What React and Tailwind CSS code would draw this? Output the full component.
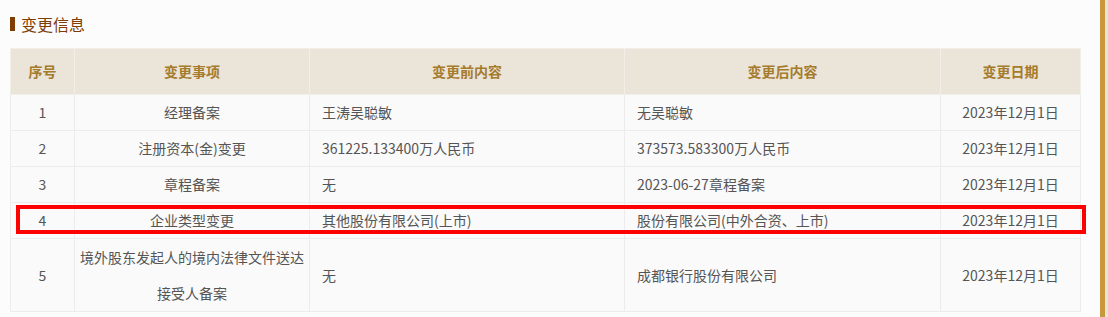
import React from "react";

const rows = [
  ["1", "经理备案", "王涛吴聪敏", "无吴聪敏", "2023年12月1日"],
  ["2", "注册资本(金)变更", "361225.133400万人民币", "373573.583300万人民币", "2023年12月1日"],
  ["3", "章程备案", "无", "2023-06-27章程备案", "2023年12月1日"],
  ["4", "企业类型变更", "其他股份有限公司(上市)", "股份有限公司(中外合资、上市)", "2023年12月1日"],
];

const font = { fontFamily: '"Noto Sans CJK SC", "Noto Sans", sans-serif' };

export default function App() {
  return (
    <div className="relative flex w-[1108px] h-[317px] bg-[#fcfcfc] overflow-hidden" style={font}>
      <div className="flex-1 pl-[10px]">
        <div className="flex items-center h-[48px] pb-[1px]">
          <div className="w-[5px] h-[14px] bg-[#7d3d03] mr-[6px]" />
          <span className="text-[16px] leading-[20px] text-[#7d3d03]">变更信息</span>
        </div>
        <table className="w-[1070px] table-fixed border-collapse text-[14px] text-[#555]">
          <colgroup>
            <col className="w-[64px]" />
            <col className="w-[235px]" />
            <col className="w-[315px]" />
            <col className="w-[316px]" />
            <col className="w-[140px]" />
          </colgroup>
          <thead>
            <tr className="h-[46px] bg-[#ebe4d9]">
              {["序号", "变更事项", "变更前内容", "变更后内容", "变更日期"].map((h) => (
                <th key={h} className="border border-[#f2eee8] text-center font-bold text-[14px] text-[#a57b2c] p-0">
                  {h}
                </th>
              ))}
            </tr>
          </thead>
          <tbody className="bg-[#fafafa]">
            {rows.map((r) => (
              <tr key={r[0]} className="h-[36px]">
                <td className="border border-[#ececec] text-center p-0">{r[0]}</td>
                <td className="border border-[#ececec] text-center p-0">{r[1]}</td>
                <td className="border border-[#ececec] text-left pl-[12px] p-0">{r[2]}</td>
                <td className="border border-[#ececec] text-left pl-[12px] p-0">{r[3]}</td>
                <td className="border border-[#ececec] text-center p-0">{r[4]}</td>
              </tr>
            ))}
            <tr className="h-[72px]">
              <td className="border border-[#ececec] text-center p-0">5</td>
              <td className="border border-[#ececec] text-center p-0 leading-[36px]">
                境外股东发起人的境内法律文件送达
                <br />
                接受人备案
              </td>
              <td className="border border-[#ececec] text-left pl-[12px] p-0">无</td>
              <td className="border border-[#ececec] text-left pl-[12px] p-0">成都银行股份有限公司</td>
              <td className="border border-[#ececec] text-center p-0">2023年12月1日</td>
            </tr>
          </tbody>
        </table>
      </div>
      <div className="w-[5px] h-full bg-[#c9983c]" />
      <div className="w-[3px] h-full bg-[#e6e2dc]" />
      <div className="absolute left-[16px] top-[205px] w-[1070px] h-[29px] border-[4px] border-[#ff0000]" />
    </div>
  );
}
